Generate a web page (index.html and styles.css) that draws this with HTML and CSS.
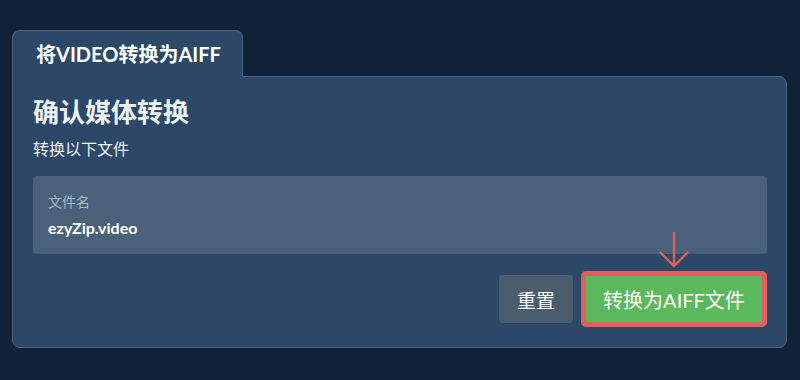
FILE: index.html
```html
<!DOCTYPE html>
<html lang="zh">
<head>
    <meta charset="UTF-8">
    <title>将VIDEO转换为AIFF</title>
    <link rel="stylesheet" href="styles.css">
</head>
<body>
    <div class="convert-container">
        <div class="convert-tabs">
            <div class="convert-tab">将VIDEO转换为AIFF</div>
        </div>
        <div class="convert-panel">
            <h2 class="convert-title">确认媒体转换</h2>
            <p class="convert-subtitle">转换以下文件</p>
            <div class="convert-file">
                <div class="convert-file-label">文件名</div>
                <div class="convert-file-name">ezyZip.video</div>
            </div>
            <div class="convert-actions">
                <button class="btn btn-reset">重置</button>
                <div class="btn-wrap">
                    <svg class="convert-arrow" width="30" height="36" viewBox="0 0 30 36">
                        <path d="M15 1 V34 M1.5 20.5 L15 34 L28.5 20.5" fill="none" stroke="#e0605c" stroke-width="2.4" stroke-linecap="round"/>
                    </svg>
                    <button class="btn btn-convert">转换为AIFF文件</button>
                </div>
            </div>
        </div>
    </div>
</body>
</html>
```

FILE: styles.css
```css
* {
    padding: 0;
    margin: 0;
    box-sizing: border-box;
}
body {
    background: #112238;
    font-family: Lato, "Noto Sans CJK SC", sans-serif;
    color: #ffffff;
}
.convert-container {
    padding: 30px 13px 0 12px;
}
.convert-tabs {
    display: flex;
}
.convert-tab {
    width: 231px;
    height: 47px;
    margin-bottom: -1px;
    padding: 8px 0 0 23px;
    background: #2c4868;
    border: 1px solid #4a6484;
    border-bottom: none;
    border-radius: 8px 8px 0 0;
    font-size: 20px;
    font-weight: bold;
    position: relative;
    z-index: 1;
}
.convert-panel {
    height: 272px;
    padding: 17px 19px 0 20px;
    background: #2c4868;
    border: 1px solid #4a6484;
    border-radius: 0 8px 8px 8px;
}
.convert-title {
    font-size: 26px;
    font-weight: bold;
    line-height: 36px;
    color: #eef1f5;
}
.convert-subtitle {
    margin-top: 7px;
    font-size: 16px;
    line-height: 24px;
    color: #eef1f5;
}
.convert-file {
    margin-top: 15px;
    height: 78px;
    padding: 16px 15px 0 15px;
    background: #4b6079;
    border-radius: 4px;
}
.convert-file-label {
    font-size: 14px;
    line-height: 20px;
    color: #aab6c4;
}
.convert-file-name {
    margin-top: 5px;
    font-size: 16px;
    font-weight: bold;
    line-height: 22px;
}
.convert-actions {
    display: flex;
    justify-content: flex-end;
    align-items: center;
    gap: 8px;
    margin-top: 17px;
}
.btn {
    border: none;
    font-family: Lato, "Noto Sans CJK SC", sans-serif;
    font-size: 19px;
    color: #ffffff;
    cursor: pointer;
}
.btn-reset {
    width: 74px;
    height: 48px;
    background: #4b5c6e;
    border-radius: 4px;
}
.btn-wrap {
    position: relative;
}
.convert-arrow {
    position: absolute;
    left: 78px;
    top: -39px;
}
.btn-convert {
    width: 186px;
    height: 56px;
    padding: 0;
    background: #5cb85c;
    border: 5px solid #e0605c;
    border-radius: 5px;
    font-size: 20px;
}
```
